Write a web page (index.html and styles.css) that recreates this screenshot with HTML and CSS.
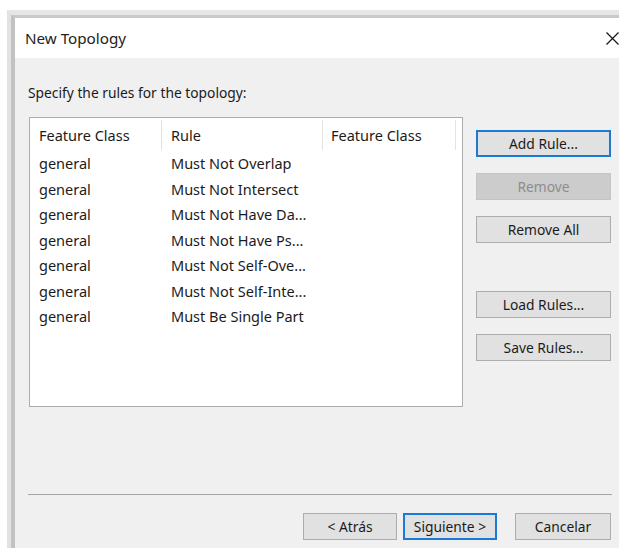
FILE: index.html
```html
<!DOCTYPE html>
<html lang="en">
<head>
<meta charset="utf-8">
<title>New Topology</title>
<link rel="stylesheet" href="styles.css">
</head>
<body>
<div class="window">
  <div class="dialog">
    <div class="titlebar">
      <span class="title">New Topology</span>
      <svg class="close" width="13" height="13" viewBox="0 0 13 13" aria-hidden="true">
        <path d="M0.5 0.5 L12.5 12.5 M12.5 0.5 L0.5 12.5" stroke="#1a1a1a" stroke-width="1.3" fill="none"/>
      </svg>
    </div>
    <div class="body">
      <p class="prompt">Specify the rules for the topology:</p>
      <div class="main">
        <div class="list">
          <div class="list-head">
            <div class="col c1">Feature Class</div>
            <div class="col c2">Rule</div>
            <div class="col c3">Feature Class</div>
          </div>
          <div class="row"><div class="col c1">general</div><div class="col c2">Must Not Overlap</div><div class="col c3"></div></div>
          <div class="row"><div class="col c1">general</div><div class="col c2">Must Not Intersect</div><div class="col c3"></div></div>
          <div class="row"><div class="col c1">general</div><div class="col c2">Must Not Have Da...</div><div class="col c3"></div></div>
          <div class="row"><div class="col c1">general</div><div class="col c2">Must Not Have Ps...</div><div class="col c3"></div></div>
          <div class="row"><div class="col c1">general</div><div class="col c2">Must Not Self-Ove...</div><div class="col c3"></div></div>
          <div class="row"><div class="col c1">general</div><div class="col c2">Must Not Self-Inte...</div><div class="col c3"></div></div>
          <div class="row"><div class="col c1">general</div><div class="col c2">Must Be Single Part</div><div class="col c3"></div></div>
        </div>
        <div class="side">
          <button class="btn default">Add Rule...</button>
          <button class="btn" disabled>Remove</button>
          <button class="btn">Remove All</button>
          <button class="btn spaced">Load Rules...</button>
          <button class="btn">Save Rules...</button>
        </div>
      </div>
      <hr class="sep">
      <div class="footer">
        <button class="btn nav">&lt; Atrás</button>
        <button class="btn nav default">Siguiente &gt;</button>
        <button class="btn nav cancel">Cancelar</button>
      </div>
    </div>
  </div>
</div>
</body>
</html>
```

FILE: styles.css
```css
html, body {
  margin: 0;
  padding: 0;
  background: #ffffff;
  overflow: hidden;
  width: 619px;
  height: 548px;
}

body {
  font-family: "Noto Sans", "Open Sans", sans-serif;
  font-size: 14.5px;
  color: #1b1b1b;
}

/* outer shadow frame of the dialog; its right and bottom edges lie off screen */
.window {
  box-sizing: border-box;
  margin: 10px 0 0 7px;
  width: 612px;
  height: 538px;
  border-top: 5px solid #e6e6e6;
  border-left: 4px solid #e2e2e2;
}

.dialog {
  box-sizing: border-box;
  height: 100%;
  border-top: 3px solid #c9c9c9;
  border-left: 4px solid #c2c2c2;
  background: #f0f0f0;
}

.titlebar {
  box-sizing: border-box;
  height: 40px;
  background: #ffffff;
  display: flex;
  align-items: center;
  justify-content: space-between;
  padding: 0 0 0 10px;
  width: 604px;
}

.title {
  font-size: 15.2px;
  color: #222;
}

.close {
  display: block;
}

.body {
  width: 584px;
  padding: 0 0 0 13px;
}

.prompt {
  margin: 0;
  padding-top: 26px;
  height: 18px;
  line-height: 18px;
  font-size: 13.8px;
}

.main {
  display: flex;
  gap: 13px;
  margin-top: 15px;
  margin-left: 1px;
}

.list {
  width: 432px;
  height: 288px;
  border: 1px solid #acacac;
  background: #ffffff;
}

.list-head {
  display: flex;
  height: 33px;
  align-items: center;
}

.list-head .col {
  height: 30px;
  line-height: 30px;
  border-right: 1px solid #e3e3e3;
}

.row {
  display: flex;
  height: 25.5px;
  line-height: 25.5px;
}

.col {
  box-sizing: border-box;
  white-space: nowrap;
  overflow: hidden;
}

.c1 { width: 132px; padding-left: 9px; }
.c2 { width: 161px; padding-left: 9px; }
.c3 { width: 133px; padding-left: 8px; }

.side {
  display: flex;
  flex-direction: column;
  gap: 16px;
  padding-top: 13px;
}

.btn {
  box-sizing: border-box;
  width: 135px;
  height: 27px;
  padding: 0;
  font-family: "Noto Sans", "Open Sans", sans-serif;
  font-size: 13.8px;
  color: #1b1b1b;
  background: #e1e1e1;
  border: 1px solid #adadad;
  border-radius: 0;
}

.btn.default {
  border: 2px solid #1a7bd6;
}

.btn:disabled {
  background: #cccccc;
  border-color: #c4c4c4;
  color: #8c8c8c;
}

.btn.spaced {
  margin-top: 32px;
}

.sep {
  margin: 87px 0 0 0;
  border: 0;
  border-top: 1px solid #a6a6a6;
  height: 0;
}

.footer {
  display: flex;
  justify-content: flex-end;
  gap: 6px;
  margin-top: 18px;
  padding-right: 1px;
}

.btn.nav {
  width: 94px;
}

.btn.cancel {
  width: 96px;
  margin-left: 12px;
}
```
